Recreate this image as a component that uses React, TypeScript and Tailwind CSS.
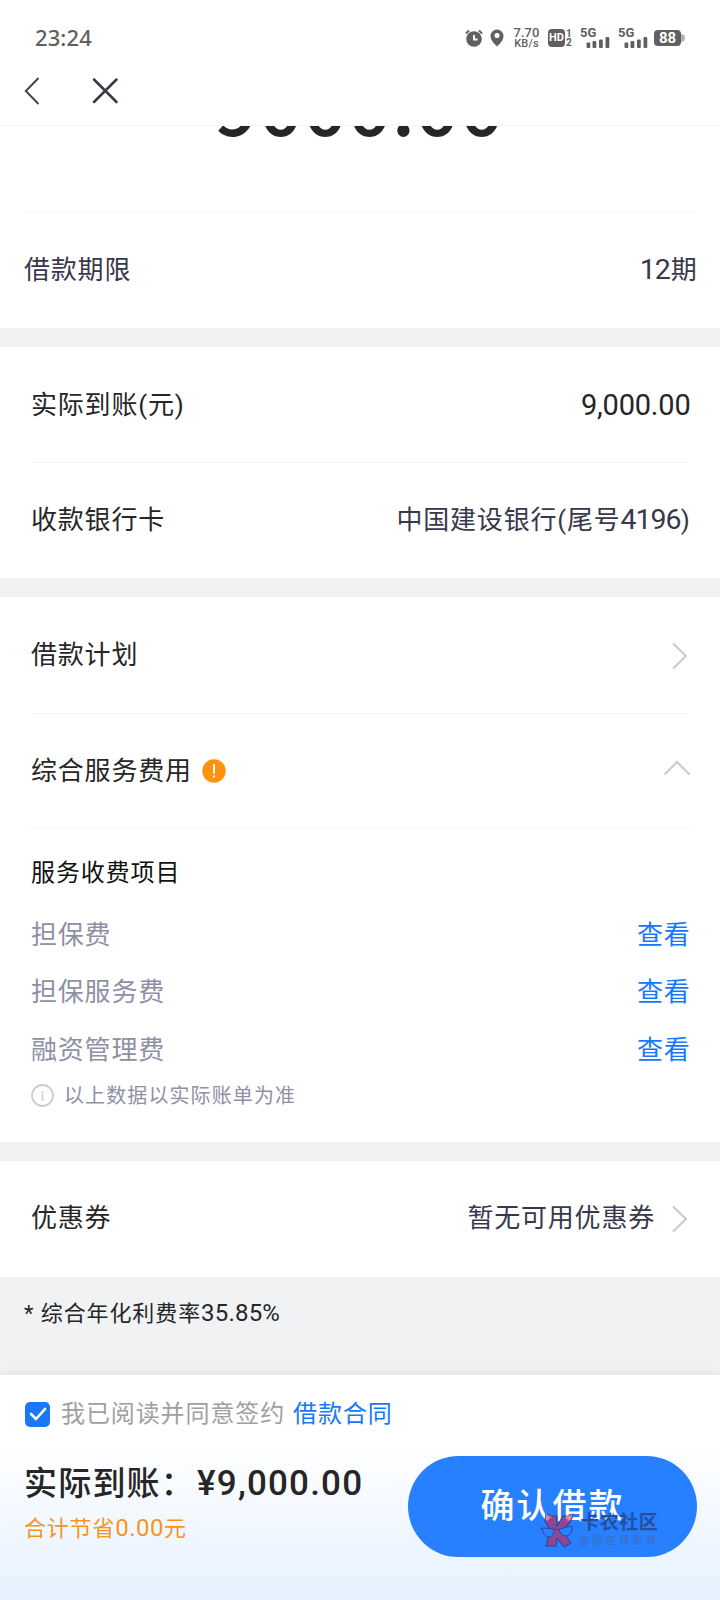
import React from 'react';

interface RowProps {
  label: React.ReactNode;
  children?: React.ReactNode;
  className?: string;
}

const feeItems = ['担保费', '担保服务费', '融资管理费'];

const Row: React.FC<RowProps> = ({ label, children, className = '' }) => (
  <div className={`flex items-center justify-between text-[26px] leading-10 tracking-[0.8px] ${className}`}>
    <div className="flex items-center">{label}</div>
    <div className="-mr-[1.5px] flex items-center text-[#38384c]">{children}</div>
  </div>
);

const Digits: React.FC<{ children: string }> = ({ children }) => (
  <span className="text-[28.500px] tracking-[-1px]">{children}</span>
);

const ChevronRight = () => (
  <svg className="mt-[2px] mr-[2.500px] h-7 w-[17px]" viewBox="0 0 17 28" fill="none" stroke="#cccccc" strokeWidth="2.200">
    <path d="M2 1.500 15 14 2 26.500" />
  </svg>
);

const ChevronUp = () => (
  <svg className="mb-[6px] h-4 w-7" viewBox="0 0 28 16" fill="none" stroke="#cccccc" strokeWidth="2.200">
    <path d="M1.500 14.500 14 2 26.500 14.500" />
  </svg>
);

const Signal = () => (
  <div className="flex h-5 w-[30px] flex-col">
    <span className="h-[9px] text-[13px] leading-[9px] font-bold">5G</span>
    <svg className="h-[11px] w-[30px]" viewBox="0 0 30 11" fill="currentColor">
      <rect x="6.500" y="5.500" width="3.800" height="5.500" rx="1" />
      <rect x="12.500" y="4" width="3.800" height="7" rx="1" />
      <rect x="19" y="2.500" width="3.800" height="8.500" rx="1" />
      <rect x="25.500" y="0" width="3.800" height="11" rx="1" />
    </svg>
  </div>
);

const StatusBar = () => (
  <div className="flex h-[76px] items-center justify-between pr-[35px] pl-[35px] text-[#606060]">
    <span className="-mt-[2px] font-['Noto_Sans'] text-[22px] font-medium tracking-[0.1px]">23:24</span>
    <div className="flex h-6 items-center">
      {/* アラーム */}
      <svg className="h-[18px] w-[18px]" viewBox="0 0 18 18">
        <circle cx="9" cy="10" r="7.800" fill="currentColor" />
        <path d="M1 4.500 4 1.500M17 4.500 14 1.500" stroke="currentColor" strokeWidth="2" />
        <path d="M9 6v4.500h3.500" fill="none" stroke="#fff" strokeWidth="1.800" />
      </svg>
      {/* 位置情報 */}
      <svg className="ml-[7px] h-[18px] w-[14px]" viewBox="0 0 14 18">
        <path
          d="M7 .5a6.500 6.500 0 0 1 6.500 6.500c0 4-3.500 7.500-6.500 10.500C4 14.500.5 11 .5 7A6.500 6.500 0 0 1 7 .5Z"
          fill="currentColor"
        />
        <circle cx="7" cy="6.500" r="2.500" fill="#fff" />
      </svg>
      <div className="ml-[10px] flex w-[25px] flex-col items-center text-[11px] leading-[11px] font-medium">
        <span className="text-[13px]">7.70</span>
        <span className="tracking-[0.2px]">KB/s</span>
      </div>
      <div className="ml-[9px] flex h-[18px] w-[17px] items-center justify-center rounded-[4px] bg-[#606060] text-[11px] font-bold text-white">
        HD
      </div>
      <div className="ml-[1px] flex w-[7px] flex-col text-[10px] leading-[9px] font-bold">
        <span>1</span>
        <span>2</span>
      </div>
      <div className="ml-[7px] flex gap-2">
        <Signal />
        <Signal />
      </div>
      <div className="ml-[6px] flex items-center">
        <div className="flex h-4 w-[27px] items-center justify-center rounded-[4px] bg-[#606060] text-[15px] font-bold text-white">
          88
        </div>
        <div className="h-2 w-1 rounded-r-[4px] bg-[#b5b5b5]"></div>
      </div>
    </div>
  </div>
);

const Watermark = () => (
  <div className="absolute top-[56px] left-[132px] flex items-start">
    <svg className="h-9 w-[34px]" viewBox="0 0 34 36">
      <g opacity=".85" strokeLinejoin="round">
        <path
          d="M6 2 11 4H17V14L23 4H28L33 2 31 9 26 15 23 20 31 31 24 35 17 26 16 34H6L8 27V14L5 9Z"
          fill="#a33c84"
          stroke="#2d3f8c"
          strokeWidth="1.200"
        />
        <path d="M6 2 12 5 6 9Z" fill="#e2788d" />
        <path d="M33 2 25 5 30 9Z" fill="#e2788d" />
        <path d="M2 16 14 17Q14 25 9 25 3 25 2 16ZM19 17 32 14Q33 22 27 24 20 24 19 17Z" fill="#2680ff" stroke="#28438f" />
        <path d="M14 17.500h5M2 16l-2 1" stroke="#28438f" />
      </g>
    </svg>
    <div className="ml-[5px] flex flex-col">
      <span className="text-[19px] leading-[21px] font-bold tracking-[0.5px] whitespace-nowrap text-[#24509f]">卡农社区</span>
      <span className="mt-[2px] text-[10px] leading-3 font-bold tracking-[3.4px] whitespace-nowrap text-[#3872cf]">
        金融在线教育
      </span>
    </div>
  </div>
);

export default function App() {
  return (
    <div className="flex h-[1600px] w-[720px] flex-col overflow-hidden bg-[#f0f2f4] font-[Roboto,'Noto_Sans_CJK_SC',sans-serif] text-[#262626]">
      {/* ヘッダー */}
      <header className="h-[126px] shrink-0 border-b border-[#f4f4f4] bg-white">
        <StatusBar />
        <div className="flex items-start pt-[1px] pl-6">
          <svg className="h-7 w-4" viewBox="0 0 16 28" fill="none" stroke="#40404a" strokeWidth="1.900">
            <path d="M14.500 1 1.800 14 14.500 27" />
          </svg>
          <svg className="ml-[52px] h-7 w-7" viewBox="0 0 28 28" fill="none" stroke="#363a47" strokeWidth="2.500">
            <path d="m2 2.500 22.500 22.500M24.500 2.500 2 25" strokeLinecap="round" />
          </svg>
        </div>
      </header>

      {/* 借入額と期間 */}
      <section className="h-[202px] shrink-0 bg-white px-6">
        <div className="flex h-[87px] items-start justify-center overflow-hidden border-b border-[#f4f4f4]">
          <div className="-mt-[66px] mr-[2px] font-['Noto_Sans_CJK_SC',sans-serif] text-[78px] leading-[84px] font-medium">9000.00</div>
        </div>
        <Row className="h-[113px] text-[#38384c]" label="借款期限">
          <Digits>12</Digits>
          <span className="ml-[1px]">期</span>
        </Row>
      </section>

      {/* 入金情報 */}
      <section className="mt-[19px] h-[231px] shrink-0 bg-white px-[31px]">
        <Row className="h-[116px] border-b border-[#f4f4f4]" label="实际到账(元)">
          <span className="text-[29px] tracking-[-0.2px] text-[#262626]">9,000.00</span>
        </Row>
        <Row className="h-[114px]" label="收款银行卡">
          中国建设银行(尾号<Digits>4196</Digits>)
        </Row>
      </section>

      {/* 返済計画と手数料 */}
      <section className="mt-[19px] h-[545px] shrink-0 bg-white px-[31px]">
        <Row className="h-[117px] border-b border-[#f4f4f4]" label="借款计划">
          <ChevronRight />
        </Row>
        <Row
          className="h-[115px] border-b border-[#f4f4f4]"
          label={
            <>
              综合服务费用
              <svg className="ml-[10px] h-6 w-6" viewBox="0 0 24 24">
                <circle cx="12" cy="12" r="11.700" fill="#ff920a" />
                <path d="M12 5v9.500M12 16.500v2" stroke="#fff" strokeWidth="2" />
              </svg>
            </>
          }
        >
          <ChevronUp />
        </Row>
        <div className="pt-[24px]">
          <h3 className="text-[24px] leading-10 tracking-[0.9px] text-[#111111]">服务收费项目</h3>
          <div className="mt-[13px]">
            {feeItems.map((item) => (
              <Row key={item} className="h-[57.500px] text-[#8f8fa6]" label={item}>
                <span className="text-[#1677ff]">查看</span>
              </Row>
            ))}
          </div>
          <div className="mt-px flex items-center text-[20px] leading-8 tracking-[1.1px] text-[#8f8fa6]">
            <svg className="mr-[10px] h-[23px] w-[23px]" viewBox="0 0 23 23" fill="none" stroke="#cccccc">
              <circle cx="11.500" cy="11.500" r="10.500" strokeWidth="1.800" />
              <path d="M11.500 7v2M11.500 10v7" strokeWidth="1.500" />
            </svg>
            以上数据以实际账单为准
          </div>
        </div>
      </section>

      {/* クーポン */}
      <section className="mt-[19px] h-[116px] shrink-0 bg-white px-[31px]">
        <Row className="h-[114px]" label="优惠券">
          暂无可用优惠券
          <span className="ml-[16px]">
            <ChevronRight />
          </span>
        </Row>
      </section>

      <div className="h-[98px] shrink-0 px-6 pt-[16px] text-[22px] leading-10 tracking-[0.9px]">
        * 综合年化利费率<span className="text-[24px] tracking-[0.2px]">35.85%</span>
      </div>

      {/* フッター */}
      <footer className="h-[225px] shrink-0 bg-linear-to-b from-white from-30% to-[#e6f1ff] px-6 shadow-[0_-2px_10px_rgba(0,0,0,0.08)]">
        <div className="flex items-center pt-[21px] text-[24px] leading-9 tracking-[0.9px] text-[#a0a0a0]">
          <span className="mr-[11px] ml-px flex h-[25px] w-[25px] items-center justify-center rounded-[5px] bg-[#1c77f5]">
            <svg className="h-4 w-[18px]" viewBox="0 0 18 16" fill="none" stroke="#fff" strokeWidth="2.600">
              <path d="m2 8 5 5L16 3" strokeLinecap="round" strokeLinejoin="round" />
            </svg>
          </span>
          我已阅读并同意签约
          <span className="ml-2 text-[#1677ff]">借款合同</span>
        </div>
        <div className="flex justify-between">
          <div className="pt-[27px]">
            <div className="flex items-center text-[33px] leading-[50px] font-medium tracking-[1.2px]">
              <span>实际到账：</span>
              <span className="ml-[2px] text-[35px]">¥9,000.00</span>
            </div>
            <div className="text-[22px] leading-[38px] tracking-[0.8px] text-[#f7941d]">
              合计节省<span className="text-[24px] tracking-[0.500px]">0.00</span>元
            </div>
          </div>
          <button className="relative mt-[24px] -mr-px h-[101px] w-[289px] rounded-full bg-[#2680ff] text-[34px] font-medium tracking-[2px] text-white">
            确认借款
            <Watermark />
          </button>
        </div>
      </footer>
    </div>
  );
}
